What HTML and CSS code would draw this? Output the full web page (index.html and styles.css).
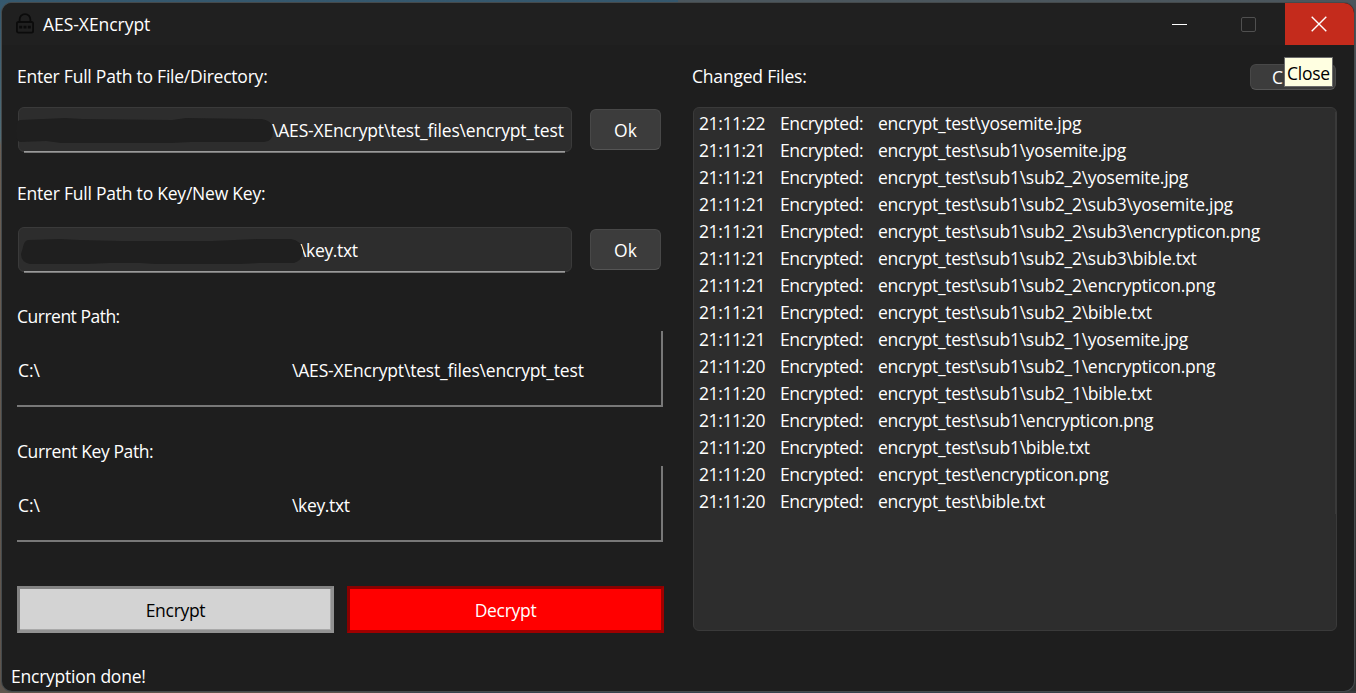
FILE: index.html
```
<!DOCTYPE html>
<html lang="en">
<head>
<meta charset="utf-8">
<title>AES-XEncrypt</title>
<link rel="stylesheet" href="styles.css">
</head>
<body>
<div class="desktop">
<main class="window">
  <header class="titlebar">
    <svg class="app-icon" width="20" height="22" viewBox="0 0 20 22" fill="none" stroke="#0b0b0b" stroke-width="1.8"><rect x="1.9" y="9" width="16.2" height="10.7" rx="1.6"/><path d="M4.6 9V6.5a5.4 5.4 0 0 1 10.8 0V9"/><path d="M4.2 14.2h3M8.5 14.2h3M12.8 14.2h3" stroke-width="2.8"/></svg>
    <span class="title">AES-XEncrypt</span>
    <div class="controls">
      <span class="control"><svg width="15" height="15" viewBox="0 0 15 15"><path d="M0 7.5h15" stroke="#fff"/></svg></span>
      <span class="control"><svg width="15" height="15" viewBox="0 0 15 15"><rect x=".5" y=".5" width="14" height="14" rx="1.5" fill="none" stroke="#505050"/></svg></span>
      <span class="control close"><svg width="16" height="16" viewBox="0 0 16 16"><path d="M.7.7l14.6 14.6M15.3.7L.7 15.3" stroke="#fff" stroke-width="1.4"/></svg></span>
    </div>
  </header>
  <div class="content">
    <section class="left">
      <p class="label l1">Enter Full Path to File/Directory:</p>
      <div class="field-row">
        <div class="field"><svg class="redaction r1" width="260" height="30" viewBox="0 0 260 30"><path d="M4 3 50 1l16 1 90 1 14-2 75 1q12 1 12 12t-9 11H175L155 26H45L30 24 4 25Q0 25 0 14T4 3Z" fill="#1f1f1f"/></svg><span class="text path1">\AES-XEncrypt\test_files\encrypt_test</span></div>
        <div class="ok"><span>Ok</span></div>
      </div>
      <p class="label l2">Enter Full Path to Key/New Key:</p>
      <div class="field-row">
        <div class="field"><svg class="redaction r2" width="286" height="28" viewBox="0 0 286 28"><path d="M8 2 40 1l20 1 42 1 90 0 45-2h34q10 1 12 12 0 9-9 12H240L220 26H135L120 25H90L66 26H10Q1 24 1 16L3 9Q4 3 8 2Z" fill="#1f1f1f"/></svg><span class="text path2">\key.txt</span></div>
        <div class="ok"><span>Ok</span></div>
      </div>
      <p class="label l3">Current Path:</p>
      <div class="frame"><span class="drive">C:\</span><span class="path1">\AES-XEncrypt\test_files\encrypt_test</span></div>
      <p class="label l4">Current Key Path:</p>
      <div class="frame"><span class="drive">C:\</span><span class="path2">\key.txt</span></div>
      <div class="actions"><div class="action encrypt"><span>Encrypt</span></div><div class="action decrypt"><span>Decrypt</span></div></div>
      <p class="status">Encryption done!</p>
    </section>
    <section class="right">
      <div class="log-head"><p class="label l5">Changed Files:</p><div class="clear"><span>C</span><div class="tooltip"><span>Close</span></div></div></div>
      <div class="log">
        <div class="row"><span class="time">21:11:22</span><span class="verb">Encrypted:</span><span>encrypt_test\yosemite.jpg</span></div>
        <div class="row"><span class="time">21:11:21</span><span class="verb">Encrypted:</span><span>encrypt_test\sub1\yosemite.jpg</span></div>
        <div class="row"><span class="time">21:11:21</span><span class="verb">Encrypted:</span><span>encrypt_test\sub1\sub2_2\yosemite.jpg</span></div>
        <div class="row"><span class="time">21:11:21</span><span class="verb">Encrypted:</span><span>encrypt_test\sub1\sub2_2\sub3\yosemite.jpg</span></div>
        <div class="row"><span class="time">21:11:21</span><span class="verb">Encrypted:</span><span>encrypt_test\sub1\sub2_2\sub3\encrypticon.png</span></div>
        <div class="row"><span class="time">21:11:21</span><span class="verb">Encrypted:</span><span>encrypt_test\sub1\sub2_2\sub3\bible.txt</span></div>
        <div class="row"><span class="time">21:11:21</span><span class="verb">Encrypted:</span><span>encrypt_test\sub1\sub2_2\encrypticon.png</span></div>
        <div class="row"><span class="time">21:11:21</span><span class="verb">Encrypted:</span><span>encrypt_test\sub1\sub2_2\bible.txt</span></div>
        <div class="row"><span class="time">21:11:21</span><span class="verb">Encrypted:</span><span>encrypt_test\sub1\sub2_1\yosemite.jpg</span></div>
        <div class="row"><span class="time">21:11:20</span><span class="verb">Encrypted:</span><span>encrypt_test\sub1\sub2_1\encrypticon.png</span></div>
        <div class="row"><span class="time">21:11:20</span><span class="verb">Encrypted:</span><span>encrypt_test\sub1\sub2_1\bible.txt</span></div>
        <div class="row"><span class="time">21:11:20</span><span class="verb">Encrypted:</span><span>encrypt_test\sub1\encrypticon.png</span></div>
        <div class="row"><span class="time">21:11:20</span><span class="verb">Encrypted:</span><span>encrypt_test\sub1\bible.txt</span></div>
        <div class="row"><span class="time">21:11:20</span><span class="verb">Encrypted:</span><span>encrypt_test\encrypticon.png</span></div>
        <div class="row"><span class="time">21:11:20</span><span class="verb">Encrypted:</span><span>encrypt_test\bible.txt</span></div>
      </div>
    </section>
  </div>
</main>
</div>
</body>
</html>
```
FILE: styles.css
```
* { box-sizing: border-box; }
body { margin: 0; font: 17.5px/26px "Open Sans", "Noto Sans", sans-serif; color: #fff; overflow: hidden; }
p { margin: 0; }
span { white-space: nowrap; }
.desktop { width: 1356px; height: 693px; padding: 3px 2px 2px; background: linear-gradient(90deg, #60564e, #5b524b 25%, #38444e 32%, #37434e 65%, #383b3c) bottom / 100% 2px no-repeat, linear-gradient(#35586e, #506b75 20%, #695e54 21%, #5d544d) left / 50% 100% no-repeat, linear-gradient(#4b565d, #393c3d 45%, #303232) right / 50% 100% no-repeat; }
.window { width: 1352px; height: 688px; border-radius: 10px; overflow: hidden; background: #1e1e1e; box-shadow: 0 0 0 1px #454a4c; }
.titlebar { display: flex; height: 42px; align-items: center; background: #202020; }
.app-icon { margin: -1px 0 0 13px; }
.title { margin-left: 8px; font-size: 17.5px; letter-spacing: -.05px; }
.controls { display: flex; margin-left: auto; height: 42px; }
.control { display: flex; width: 69px; padding-right: 4px; align-items: center; justify-content: center; }
.close { padding-right: 1px; background: #c42b1c; }
.content { display: flex; height: 646px; padding-left: 15px; }
.left { width: 676px; }
.label { height: 26px; letter-spacing: -.35px; }
.l1 { margin: 18px 0; letter-spacing: -.23px; }
.l2 { margin: 27px 0 21px; letter-spacing: -.22px; }
.l3 { margin: 30px 0 2px; letter-spacing: -.5px; }
.l4 { margin: 31px 0 2px; letter-spacing: -.4px; }
.l5 { margin-left: -1px; letter-spacing: -.2px; }
.field-row { display: flex; height: 46px; gap: 18px; padding-left: 1px; }
.field { position: relative; width: 554px; height: 45px; border: 1px solid #3a3a3a; border-radius: 6px; background: #2d2d2d; padding-top: 9px; }
.field::after { content: ""; position: absolute; left: 5px; right: 6px; bottom: -2px; height: 2px; background: linear-gradient(#9a9a9a 50%, #777 50%); }
.redaction { position: absolute; }
.r1 { left: -3px; top: 9px; }
.r2 { left: 1px; top: 10px; }
.field .path1 { margin-left: 253px; }
.field .path2 { margin-left: 281px; }
.path1 { letter-spacing: -.18px; }
.path2 { letter-spacing: -.35px; }
.ok { display: flex; width: 71px; height: 41px; margin-top: 2px; align-items: center; justify-content: center; border: 1px solid #484848; border-bottom-color: #555; border-radius: 6px; background: #3c3c3c; }
.frame { display: flex; width: 646px; height: 76px; padding: 26px 0 0 1px; border-right: 2px solid #787878; border-bottom: 2px solid #787878; }
.drive { width: 274px; letter-spacing: -.1px; }
.actions { display: flex; gap: 13px; margin-top: 44px; }
.action { display: flex; width: 317px; height: 47px; justify-content: center; padding-top: 8px; letter-spacing: -.3px; }
.encrypt { color: #000; background: #d3d3d3; border: 3px solid #838383; box-shadow: inset -1px -1px #a9a9a9; border-right-color: #929292; border-bottom-color: #929292; }
.decrypt { background: #f00; border: 3px solid #8b0000; border-right-color: #a00000; border-bottom-color: #a00000; }
.status { margin: 30px 0 0 -6px; letter-spacing: -.23px; }
.right { width: 644px; }
.log-head { display: flex; height: 44px; margin-top: 18px; justify-content: space-between; }
.clear { position: relative; width: 86px; height: 26px; margin: 1px 1px 0 0; border: 1px solid #484848; border-bottom-color: #555; border-radius: 6px; background: #3c3c3c; padding-left: 21px; line-height: 25px; }
.tooltip { position: absolute; left: 33px; top: -8px; width: 49px; height: 30px; padding: 2px 0 0 2px; border: 1px solid #6b6b6b; background: #ffffe1; color: #000; line-height: 26px; letter-spacing: -.25px; }
.log { position: relative; height: 524px; border: 1px solid #3a3a3a; border-radius: 6px; background: #2d2d2d; padding: 2px 0 0 5px; }
.log::after { content: ""; position: absolute; right: 0; top: 4px; width: 1px; height: 402px; background: #3a3a3a; }
.row { display: flex; height: 27px; line-height: 27px; letter-spacing: -.27px; }
.time { width: 81px; letter-spacing: -.4px; }
.verb { width: 98px; letter-spacing: -.35px; }
```
